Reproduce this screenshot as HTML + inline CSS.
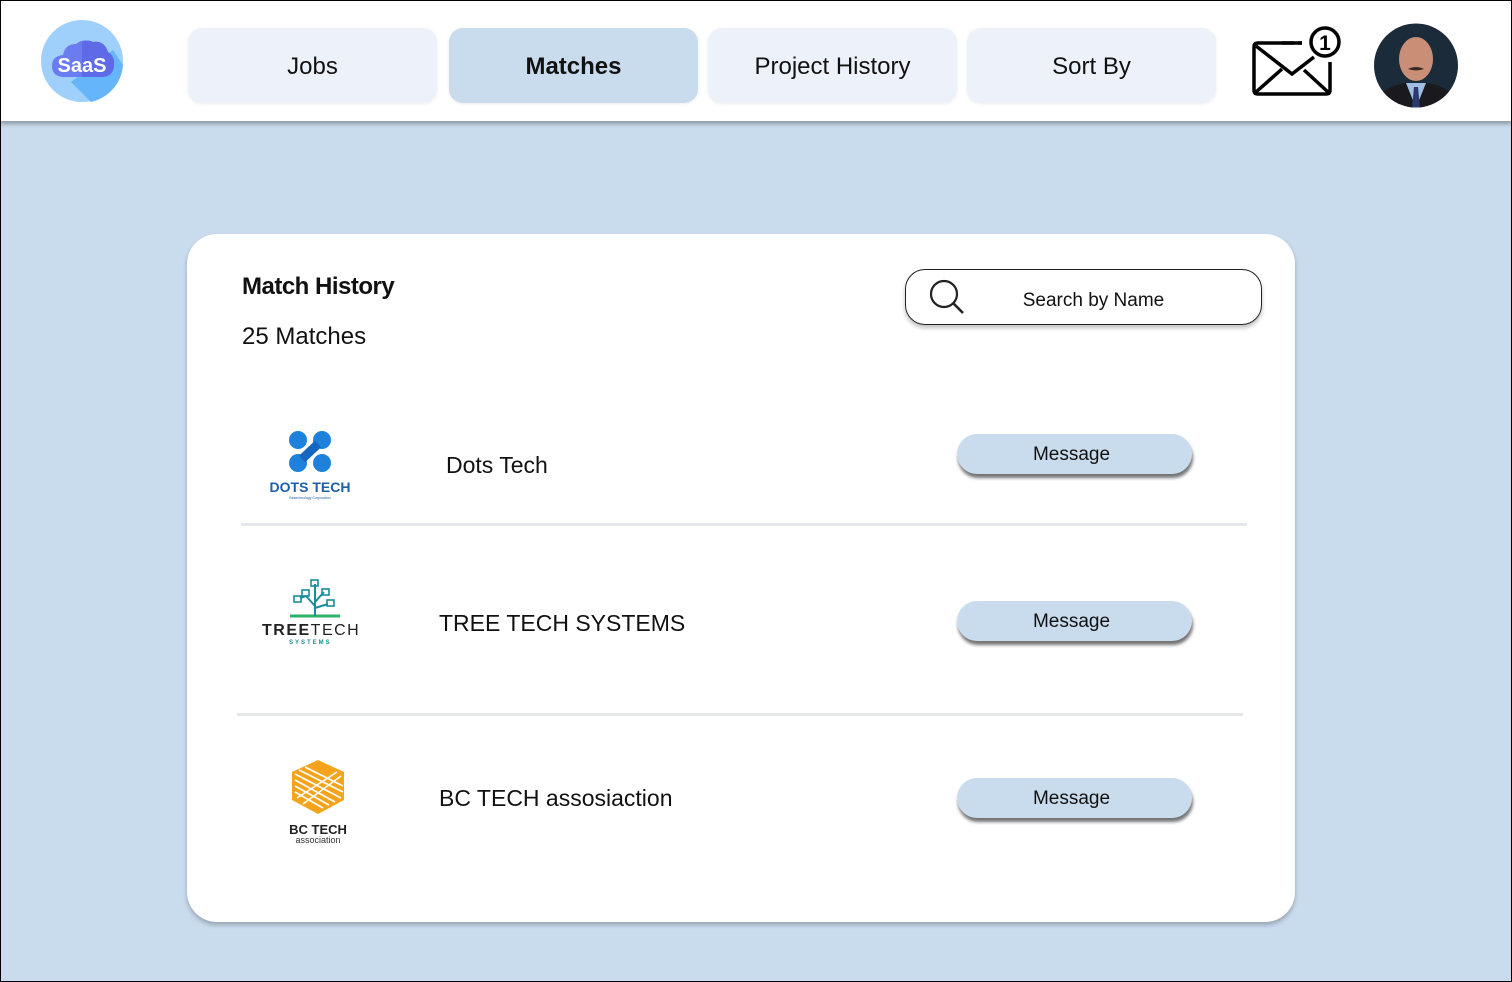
<!DOCTYPE html>
<html><head><meta charset="utf-8"><style>
*{box-sizing:border-box;margin:0;padding:0}
body{width:1512px;height:982px;overflow:hidden;background:#c9dcee;font-family:"Liberation Sans",sans-serif;color:#111;position:relative}
.frame{position:absolute;inset:0;border:1px solid #000;pointer-events:none;z-index:10}
.hdr{position:absolute;left:0;top:0;width:1512px;height:121px;background:#fff;box-shadow:0 3px 4px rgba(0,0,0,.3)}
.nav{position:absolute;top:28px;width:249px;height:75px;border-radius:14px;background:#edf2fa;font-size:24px;display:flex;align-items:center;justify-content:center;box-shadow:0 1px 3px rgba(0,0,0,.08);padding-top:2px}
.card{position:absolute;left:187px;top:234px;width:1108px;height:688px;background:#fff;border-radius:30px;box-shadow:0 3px 5px rgba(0,0,0,.25)}
.abs{position:absolute}
.btn{position:absolute;left:957px;width:235px;height:40px;border-radius:20px;background:#c9dcee;font-size:19px;display:flex;align-items:center;justify-content:center;box-shadow:1px 4px 3px rgba(0,0,0,.55);padding-top:2px;padding-right:6px}
.line{position:absolute;height:3px;background:#e5e7ea}
.name{position:absolute;font-size:23px}
</style></head><body>
<div class="hdr">
 <svg class="abs" style="left:41px;top:20px" width="82" height="82" viewBox="0 0 82 82">
  <circle cx="41" cy="41" r="41" fill="#9fd0fb"/>
  <path d="M30 62 L50 82 A41 41 0 0 0 82 45 L72 30 Z" fill="#64b5f9"/>
  <path d="M24 57 Q11 57 11 46 Q11 36 22 35 Q24 24 35 24 Q42 18 52 22 Q63 20 67 32 Q74 36 73 46 Q72 57 60 57 Z" fill="#6b7cf0"/>
  <path d="M41 22 Q46 19 52 22 Q63 20 67 32 Q74 36 73 46 Q72 57 60 57 L41 57Z" fill="#5e6ae8"/>
  <text x="41" y="52" text-anchor="middle" font-family="Liberation Sans" font-weight="bold" font-size="20" fill="#fff">SaaS</text>
 </svg>
 <div class="nav" style="left:188px">Jobs</div>
 <div class="nav" style="left:449px;background:#c9dcee;font-weight:bold">Matches</div>
 <div class="nav" style="left:708px">Project History</div>
 <div class="nav" style="left:967px">Sort By</div>
 <svg class="abs" style="left:1252px;top:24px" width="92" height="72" viewBox="0 0 92 72">
  <path d="M50 19 H6 Q2 19 2 23 V66 Q2 70 6 70 H74 Q78 70 78 66 V38" fill="none" stroke="#000" stroke-width="3.5"/>
  <path d="M4 22 L40 50 L62 33 M4 68 L30 45 M76 68 L52 46" fill="none" stroke="#000" stroke-width="3.5"/>
  <path d="M30 19 H42 M46 19 H50" stroke="#000" stroke-width="3.5"/>
  <circle cx="73" cy="18" r="14" fill="#fff" stroke="#000" stroke-width="3.5"/>
  <text x="73" y="26" text-anchor="middle" font-family="Liberation Sans" font-weight="bold" font-size="21">1</text>
 </svg>
 <svg class="abs" style="left:1374px;top:23px" width="84" height="85" viewBox="0 0 84 85">
  <defs><clipPath id="c"><circle cx="42" cy="42.5" r="42"/></clipPath></defs>
  <g clip-path="url(#c)">
   <rect width="84" height="85" fill="#1c2b3a"/>
   <path d="M0 85 L6 70 Q20 62 30 60 L54 60 Q66 62 78 70 L84 85Z" fill="#1a1a1e"/>
   <path d="M32 60 L42 85 L52 60Z" fill="#9fbde0"/>
   <path d="M40 64 L44 64 L46 85 L38 85Z" fill="#2a3a70"/>
   <ellipse cx="42" cy="36" rx="17" ry="22" fill="#c98f76"/>
   <path d="M34 46 Q42 42 50 46 Q42 49 34 46Z" fill="#3a2a22"/>
  </g>
 </svg>
</div>
<div class="card">
 <div class="abs" style="left:55px;top:39px;font-size:24px;font-weight:bold;letter-spacing:-0.5px">Match History</div>
 <div class="abs" style="left:55px;top:89px;font-size:24px">25 Matches</div>
 <div class="abs" style="left:718px;top:35px;width:357px;height:56px;border:1.5px solid #222;border-radius:20px;box-shadow:0 3px 4px rgba(0,0,0,.25);font-size:19px;display:flex;align-items:center;justify-content:center;padding-left:20px;padding-top:8px">Search by Name</div>
 <svg class="abs" style="left:741px;top:44px" width="40" height="40" viewBox="0 0 40 40"><circle cx="16" cy="16" r="13" fill="none" stroke="#222" stroke-width="2.2"/><path d="M25.5 25.5 L35 35" stroke="#222" stroke-width="2.6"/></svg>
</div>
<svg class="abs" style="left:262px;top:428px" width="100" height="75" viewBox="0 0 100 75">
 <circle cx="36" cy="12" r="9" fill="#1e82dc"/><circle cx="60" cy="12" r="9" fill="#1e82dc"/>
 <circle cx="36" cy="35" r="9" fill="#1e82dc"/><circle cx="60" cy="35" r="9" fill="#1e82dc"/>
 <path d="M56 16 L40 31" stroke="#1566c0" stroke-width="9"/>
 <text x="48" y="64" text-anchor="middle" font-family="Liberation Sans" font-weight="bold" font-size="14" fill="#1f5fa8">DOTS TECH</text>
 <text x="48" y="71" text-anchor="middle" font-family="Liberation Sans" font-size="3.5" fill="#1f5fa8">Biotechnology Corporation</text>
</svg>
<div class="name" style="left:446px;top:452px">Dots Tech</div>
<div class="btn" style="top:434px">Message</div>
<div class="line" style="left:241px;top:523px;width:1006px"></div>
<svg class="abs" style="left:260px;top:578px" width="104" height="70" viewBox="0 0 104 70">
 <path d="M30 38 H80" stroke="#2fb36a" stroke-width="3"/>
 <path d="M55 38 V6 M55 28 L46 18 M55 24 L64 14 M55 30 L68 26 M46 18 L40 20" stroke="#1b8c9a" stroke-width="2" fill="none"/>
 <rect x="51" y="2" width="7" height="6" fill="none" stroke="#1b8c9a" stroke-width="1.6"/>
 <rect x="42" y="12" width="7" height="6" fill="none" stroke="#1b8c9a" stroke-width="1.6"/>
 <rect x="62" y="11" width="7" height="6" fill="none" stroke="#1b8c9a" stroke-width="1.6"/>
 <rect x="34" y="18" width="7" height="6" fill="none" stroke="#1b8c9a" stroke-width="1.6"/>
 <rect x="67" y="22" width="7" height="6" fill="none" stroke="#1b8c9a" stroke-width="1.6"/>
 <text x="2" y="57" font-family="Liberation Sans" font-size="16" letter-spacing="1.5" fill="#222"><tspan font-weight="bold">TREE</tspan>TECH</text>
 <text x="29" y="66" font-family="Liberation Sans" font-weight="bold" font-size="6" letter-spacing="2" fill="#1b8c9a">SYSTEMS</text>
</svg>
<div class="name" style="left:439px;top:610px">TREE TECH SYSTEMS</div>
<div class="btn" style="top:601px">Message</div>
<div class="line" style="left:237px;top:713px;width:1006px"></div>
<svg class="abs" style="left:285px;top:758px" width="66" height="90" viewBox="0 0 66 90">
 <path d="M33 2 L59 14 V42 L33 56 L7 42 V14Z" fill="#f3a41c"/>
 <g stroke="#fff" stroke-width="1.6"><path d="M10 16 L56 40 M10 22 L50 44 M10 28 L44 47 M14 12 L58 34 M20 9 L58 28 M10 34 L38 50"/><path d="M56 18 L18 46 M52 14 L12 40"/></g>
 <text x="33" y="76" text-anchor="middle" font-family="Liberation Sans" font-weight="bold" font-size="13" fill="#222">BC TECH</text>
 <text x="33" y="85" text-anchor="middle" font-family="Liberation Sans" font-size="9" fill="#333">association</text>
</svg>
<div class="name" style="left:439px;top:785px">BC TECH assosiaction</div>
<div class="btn" style="top:778px">Message</div>
<div class="frame"></div>
</body></html>
